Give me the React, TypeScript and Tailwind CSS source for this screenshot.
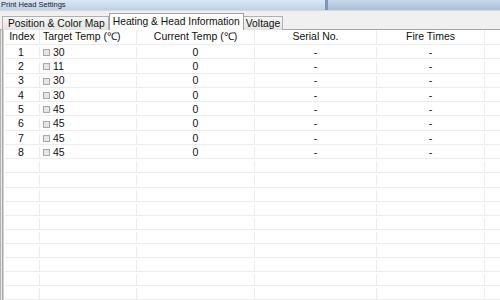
import React from 'react';

const rows = [
  { idx: 1, target: '30' },
  { idx: 2, target: '11' },
  { idx: 3, target: '30' },
  { idx: 4, target: '30' },
  { idx: 5, target: '45' },
  { idx: 6, target: '45' },
  { idx: 7, target: '45' },
  { idx: 8, target: '45' },
];

const emptyRows = Array.from({ length: 10 }, (_, i) => i);

const Cell: React.FC<{ w: string; children?: React.ReactNode; className?: string }> = ({ w, children, className = '' }) => (
  <div className={`${w} h-full shrink-0 border-r border-[#ececec] flex items-center ${className}`}>{children}</div>
);

const Row: React.FC<{ children?: React.ReactNode; header?: boolean }> = ({ children, header }) => (
  <div className={`flex ${header ? 'h-[15px]' : 'h-[14.3px] pt-[2px]'} border-b border-[#ececec]`}>{children}</div>
);

const Box = () => <span className="inline-block w-[7px] h-[7px] border border-[#a8a8a8] bg-[#e6e6e6] mr-[3px]" />;

export default function App() {
  return (
    <div className="w-[500px] h-[300px] overflow-hidden bg-white text-[#111] flex flex-col" style={{ fontFamily: '"Liberation Sans", Arial, sans-serif' }}>
      {/* title bar */}
      <div className="h-[10px] shrink-0 flex bg-gradient-to-b from-[#dbe7f5] to-[#bcd1ea]">
        <div className="flex-1 pl-[1px] text-[7.5px] leading-[10px] text-[#222]">Print Head Settings</div>
        <div className="w-[3px] bg-[#7f97b5]" />
        <div className="w-[172px] bg-gradient-to-b from-[#c9d8ea] to-[#a9bfda]" />
      </div>

      {/* tab strip */}
      <div className="h-[20px] shrink-0 bg-[#f0f0f0] border-t border-[#d8d8d8] flex items-end pl-[2px] border-b border-b-[#a8a8a8]">
        <div className="h-[14px] pl-[5px] pr-[3px] border border-b-0 border-[#b0b0b0] bg-gradient-to-b from-[#f6f6f6] to-[#e4e4e4] text-[10.3px] leading-[13px] mb-[-1px]">Position &amp; Color Map</div>
        <div className="h-[17px] px-[3px] border border-b-0 border-[#a0a0a0] bg-white text-[10.3px] leading-[16px] mb-[-1px] relative z-10">Heating &amp; Head Information</div>
        <div className="h-[14px] px-[2px] border border-b-0 border-l-0 border-[#b0b0b0] bg-gradient-to-b from-[#f6f6f6] to-[#e4e4e4] text-[10.3px] leading-[13px] mb-[-1px]">Voltage</div>
      </div>

      {/* table */}
      <div className="flex flex-1 min-h-0">
        <div className="w-[5px] shrink-0 flex">
          <div className="w-[1px] bg-[#b4b4b4]" />
          <div className="w-[1px] bg-[#e8e8e8]" />
          <div className="w-[1px] bg-[#a8a8a8]" />
          <div className="w-[1px] bg-[#d4d4d4]" />
          <div className="w-[1px] bg-white" />
        </div>
        <div className="flex-1 flex flex-col text-[10.5px]">
          <Row header>
            <Cell w="w-[35px]" className="justify-center">Index</Cell>
            <Cell w="w-[97px]" className="pl-[3px]">Target Temp (℃)</Cell>
            <Cell w="w-[118px]" className="justify-center">Current Temp (℃)</Cell>
            <Cell w="w-[122px]" className="justify-center">Serial No.</Cell>
            <Cell w="w-[108px]" className="justify-center">Fire Times</Cell>
          </Row>
          {rows.map((r) => (
            <Row key={r.idx}>
              <Cell w="w-[35px]" className="justify-center pr-[2px]">{r.idx}</Cell>
              <Cell w="w-[97px]" className="pl-[3px]"><Box />{r.target}</Cell>
              <Cell w="w-[118px]" className="justify-center">0</Cell>
              <Cell w="w-[122px]" className="justify-center">-</Cell>
              <Cell w="w-[108px]" className="justify-center">-</Cell>
            </Row>
          ))}
          {emptyRows.map((i) => (
            <Row key={i}>
              <Cell w="w-[35px]" />
              <Cell w="w-[97px]" />
              <Cell w="w-[118px]" />
              <Cell w="w-[122px]" />
              <Cell w="w-[108px]" />
            </Row>
          ))}
        </div>
      </div>
    </div>
  );
}
